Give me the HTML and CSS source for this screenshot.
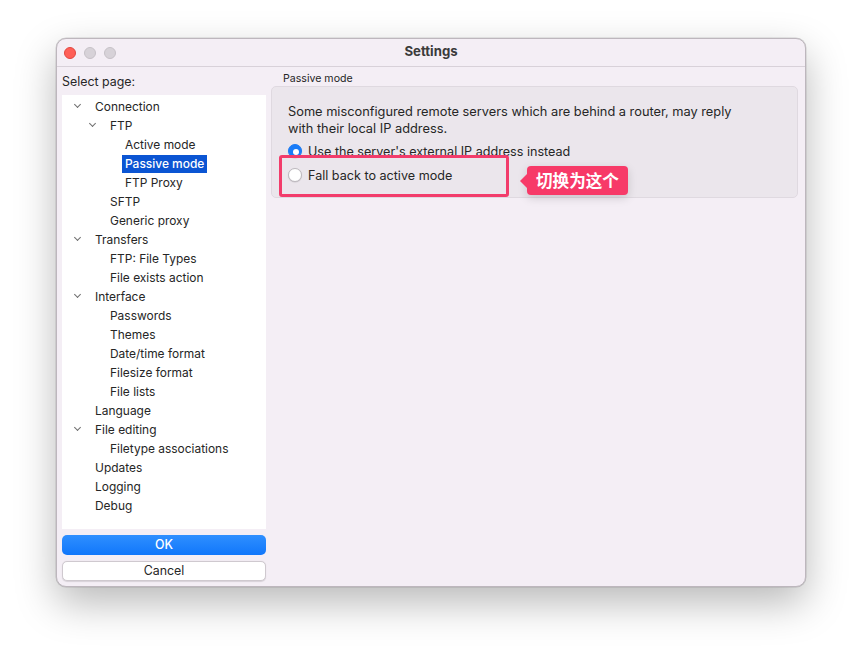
FILE: index.html
```html
<!DOCTYPE html>
<html>
<head>
<meta charset="utf-8">
<link rel="stylesheet" href="styles.css">
</head>
<body>
<div class="window">
  <div class="titlebar">
    <div class="lights">
      <span class="light red"></span>
      <span class="light grey"></span>
      <span class="light grey"></span>
    </div>
    <div class="title">Settings</div>
  </div>
  <div class="content">
    <div class="left">
      <div class="select-label">Select page:</div>
      <div class="tree">
        <div class="row l1"><span class="chev"></span><span class="txt">Connection</span></div>
        <div class="row l2"><span class="chev"></span><span class="txt">FTP</span></div>
        <div class="row l3"><span class="txt">Active mode</span></div>
        <div class="row l3"><span class="txt sel">Passive mode</span></div>
        <div class="row l3"><span class="txt">FTP Proxy</span></div>
        <div class="row l2"><span class="txt">SFTP</span></div>
        <div class="row l2"><span class="txt">Generic proxy</span></div>
        <div class="row l1"><span class="chev"></span><span class="txt">Transfers</span></div>
        <div class="row l2"><span class="txt">FTP: File Types</span></div>
        <div class="row l2"><span class="txt">File exists action</span></div>
        <div class="row l1"><span class="chev"></span><span class="txt">Interface</span></div>
        <div class="row l2"><span class="txt">Passwords</span></div>
        <div class="row l2"><span class="txt">Themes</span></div>
        <div class="row l2"><span class="txt">Date/time format</span></div>
        <div class="row l2"><span class="txt">Filesize format</span></div>
        <div class="row l2"><span class="txt">File lists</span></div>
        <div class="row l1"><span class="txt">Language</span></div>
        <div class="row l1"><span class="chev"></span><span class="txt">File editing</span></div>
        <div class="row l2"><span class="txt">Filetype associations</span></div>
        <div class="row l1"><span class="txt">Updates</span></div>
        <div class="row l1"><span class="txt">Logging</span></div>
        <div class="row l1"><span class="txt">Debug</span></div>
      </div>
      <div class="btn ok">OK</div>
      <div class="btn cancel">Cancel</div>
    </div>
    <div class="right">
      <div class="group-label">Passive mode</div>
      <div class="group">
        <p class="desc">Some misconfigured remote servers which are behind a router, may reply<br>with their local IP address.</p>
        <div class="radio-row"><span class="radio on"></span><span>Use the server's external IP address instead</span></div>
        <div class="radio-row"><span class="radio"></span><span>Fall back to active mode</span></div>
        <div class="highlight-box"></div>
        <div class="callout">切换为这个</div>
      </div>
    </div>
  </div>
</div>
</body>
</html>
```
FILE: styles.css
```css
* { box-sizing: border-box; }
html, body { margin: 0; padding: 0; }
body {
  background: #ffffff;
  width: 862px;
  height: 661px;
  font-family: Inter, "Noto Sans CJK SC", sans-serif;
  font-size: 12.4px;
  color: #262626;
  padding: 38px 0 0 56px;
}
.window {
  width: 750px;
  height: 549px;
  background: #f4eef5;
  border-radius: 10px;
  border: 1px solid #bdb6bd;
  box-shadow: 0 16px 40px rgba(0,0,0,0.28), 0 0 0 0.5px rgba(0,0,0,0.15);
  display: flex;
  flex-direction: column;
  overflow: hidden;
}
.titlebar {
  height: 28px;
  flex: none;
  border-bottom: 1px solid #d8d1d9;
  position: relative;
  display: flex;
  align-items: center;
}
.lights {
  display: flex;
  gap: 8px;
  padding-left: 7px;
}
.light {
  width: 12px;
  height: 12px;
  border-radius: 50%;
  display: block;
}
.light.red { background: #fe5f57; border: 0.5px solid #e1463f; }
.light.grey { background: #d7d2d8; border: 0.5px solid #c6c1c7; }
.title {
  position: absolute;
  left: 0; right: 0; top: 0; bottom: 3px;
  display: flex;
  align-items: center;
  justify-content: center;
  font-weight: 700;
  font-size: 13.2px;
  color: #3b3b3b;
}
.content {
  flex: 1;
  display: flex;
  padding: 0 7px 0 5px;
  gap: 5px;
}
.left {
  width: 204px;
  display: flex;
  flex-direction: column;
}
.select-label {
  height: 28px;
  padding-top: 6px;
  font-size: 12.4px;
  line-height: 17px;
}
.tree {
  background: #ffffff;
  height: 434px;
  padding-top: 2px;
  font-size: 11.95px;
}
.row {
  height: 19px;
  line-height: 19px;
  display: flex;
  align-items: center;
  position: relative;
  white-space: nowrap;
}
.row.l1 { padding-left: 30px; }
.row.l2 { padding-left: 45px; }
.row.l3 { padding-left: 60px; }
.row .txt { padding: 0 3px; line-height: 18px; }
.row .sel { background: #0b55d3; color: #fff; font-weight: 500; }
.chev {
  position: absolute;
  width: 5px; height: 5px;
  border-right: 1.3px solid #6f6f6f;
  border-bottom: 1.3px solid #6f6f6f;
  transform: rotate(45deg);
  top: 5px;
}
.row.l1 .chev { left: 13px; }
.row.l2 .chev { left: 28px; }
.btn {
  height: 20px;
  border-radius: 5px;
  text-align: center;
  line-height: 20px;
  font-size: 12.4px;
}
.btn.ok {
  margin-top: 6px;
  background: linear-gradient(#2f8fff, #1177fb);
  color: #fff;
  font-weight: 500;
}
.btn.cancel {
  margin-top: 6px;
  background: #ffffff;
  border: 0.5px solid #cfc9cf;
  line-height: 17px;
  box-shadow: 0 0.5px 1px rgba(0,0,0,0.12);
}
.right {
  flex: 1;
  display: flex;
  flex-direction: column;
}
.group-label {
  font-size: 10.6px;
  height: 19px;
  padding: 5px 0 0 12px;
  line-height: 14px;
}
.group {
  position: relative;
  background: #ebe6ec;
  border: 1px solid #dfd9e0;
  border-radius: 5px;
  height: 112px;
  padding: 16px 16px 0 16px;
}
.desc {
  margin: 0;
  line-height: 17px;
  font-size: 12.8px;
}
.radio-row {
  display: flex;
  align-items: center;
  gap: 6px;
  height: 24px;
  font-size: 12.6px;
}
.radio-row:first-of-type { margin-top: 2px; }
.radio {
  width: 14px;
  height: 14px;
  border-radius: 50%;
  background: #fff;
  border: 0.5px solid #bdb8be;
  box-shadow: 0 0.5px 1px rgba(0,0,0,0.15);
  flex: none;
  position: relative;
}
.radio.on {
  background: #1a7cf8;
  border-color: #1a7cf8;
}
.radio.on::after {
  content: "";
  position: absolute;
  width: 6px; height: 6px;
  border-radius: 50%;
  background: #fff;
  left: 3.5px; top: 3.5px;
}
.highlight-box {
  position: absolute;
  left: 7px;
  top: 68px;
  width: 230px;
  height: 42px;
  border: 3px solid #f23c6b;
  border-radius: 3px;
}
.callout {
  position: absolute;
  left: 255px;
  top: 79px;
  height: 29px;
  padding: 0 9px;
  background: #f73a68;
  color: #fff;
  font-weight: 700;
  font-size: 16.6px;
  line-height: 29px;
  border-radius: 4px;
  box-shadow: 0 3px 10px rgba(0,0,0,0.15);
  font-family: "Noto Sans CJK SC", sans-serif;
}
.callout::before {
  content: "";
  position: absolute;
  left: -7px;
  top: 8px;
  border-top: 7px solid transparent;
  border-bottom: 7px solid transparent;
  border-right: 7px solid #f73a68;
}
```
